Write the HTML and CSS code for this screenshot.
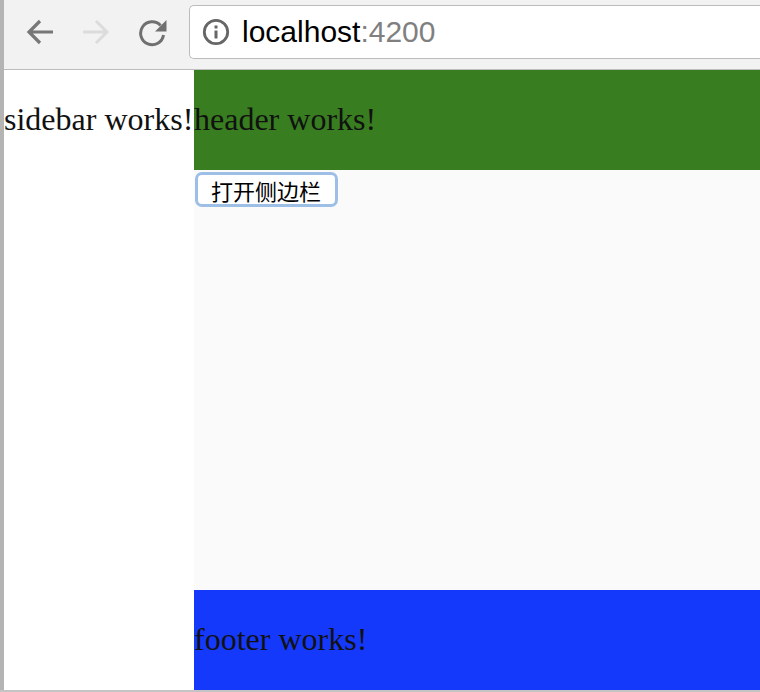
FILE: index.html
```html
<!DOCTYPE html>
<html lang="zh">
<head>
<meta charset="utf-8">
<title>localhost:4200</title>
<link rel="stylesheet" href="styles.css">
</head>
<body>
<div class="window">
  <div class="toolbar">
    <div class="nav">
      <svg class="icon" width="30" height="30" viewBox="0 0 30 30"><path d="M28 15H4M15 4L4 15l11 11" fill="none" stroke="#777" stroke-width="3.200"/></svg>
      <svg class="icon" width="30" height="30" viewBox="0 0 30 30"><path d="M2 15h24M15 4l11 11-11 11" fill="none" stroke="#dcdcdc" stroke-width="3"/></svg>
      <svg class="icon" width="30" height="30" viewBox="0 0 30 30"><path d="M23.600 8.500A11.500 11.500 0 1 0 26.500 18" fill="none" stroke="#707070" stroke-width="3"/><path d="M29.500 3v11.500H18z" fill="#707070"/></svg>
    </div>
    <div class="omnibox">
      <svg width="28" height="28" viewBox="0 0 28 28"><circle cx="14" cy="14" r="11.700" fill="none" stroke="#666" stroke-width="2.800"/><rect x="12.500" y="12.500" width="3" height="8" fill="#666"/><rect x="12.500" y="7.500" width="3" height="3" fill="#666"/></svg>
      <span class="url">localhost<span class="port">:4200</span></span>
    </div>
  </div>
  <div class="page">
    <aside class="sidebar"><p class="label">sidebar works!</p></aside>
    <div class="content">
      <header class="header"><p class="label">header works!</p></header>
      <main class="main"><button class="open" type="button">打开侧边栏</button></main>
      <footer class="footer"><p class="label">footer works!</p></footer>
    </div>
  </div>
</div>
</body>
</html>
```
FILE: styles.css
```css
html, body { margin: 0; height: 100%; overflow: hidden; }
body { background: #c4c4c4; }
.window {
  height: 690px;
  border-left: 4px solid #b4b4b4;
  box-sizing: border-box;
  display: flex;
  flex-direction: column;
  font-family: "Liberation Serif", serif;
  color: #111;
}
.toolbar {
  height: 70px;
  box-sizing: border-box;
  flex: none;
  display: flex;
  align-items: center;
  background: #f2f2f2;
  border-bottom: 1px solid #bdbdbd;
  padding: 0 0 6px 21px;
}
.nav { display: flex; gap: 26px; width: 164px; flex: none; }
.icon { display: block; }
.omnibox {
  flex: 1;
  height: 54px;
  box-sizing: border-box;
  background: #fff;
  border: 1px solid #bcbcbc;
  border-right: 0;
  border-radius: 5px 0 0 5px;
  display: flex;
  align-items: center;
  gap: 12px;
  padding-left: 12px;
}
.url { font: 30px "Liberation Sans", sans-serif; color: #000; }
.port { color: #808080; }
.page { flex: 1; display: flex; background: #fff; min-height: 0; }
.sidebar { width: 190px; flex: none; }
.content { flex: 1; display: flex; flex-direction: column; }
.label { margin: 0; font-size: 32px; line-height: 98px; white-space: nowrap; }
.header { height: 100px; background: #387d20; }
.main { flex: 1; background: #fafafa; }
.footer { height: 100px; background: #1539fb; }
.open {
  display: block;
  margin: 2px 0 0 1px;
  width: 143px;
  height: 35px;
  padding: 0 1px 0 0;
  background: #fff;
  border: 3px solid #9dbfe6;
  border-radius: 7px;
  font: 22px/22px "Noto Sans CJK SC", sans-serif;
  color: #000;
}
```
